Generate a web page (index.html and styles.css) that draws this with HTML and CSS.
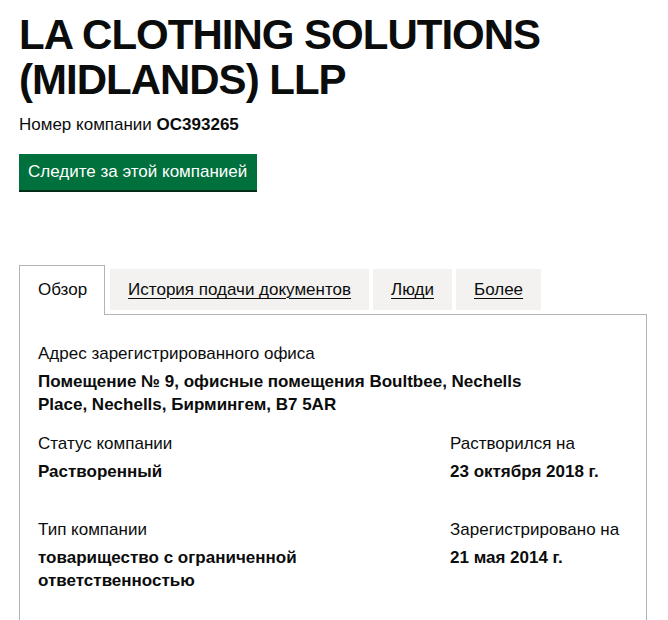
FILE: index.html
```html
<!DOCTYPE html>
<html lang="ru">
<head>
<meta charset="utf-8">
<title>LA CLOTHING SOLUTIONS (MIDLANDS) LLP</title>
<link rel="stylesheet" href="styles.css">
</head>
<body>
<main class="page">
  <h1 class="title">LA CLOTHING SOLUTIONS (MIDLANDS) LLP</h1>
  <p class="company-number">Номер компании <strong>OC393265</strong></p>
  <a class="button" href="#">Следите за этой компанией</a>

  <div class="tabs">
    <ul class="tab-list">
      <li class="tab tab-selected"><a href="#">Обзор</a></li>
      <li class="tab"><a href="#">История подачи документов</a></li>
      <li class="tab"><a href="#">Люди</a></li>
      <li class="tab"><a href="#">Более</a></li>
    </ul>
    <section class="panel">
      <dl class="item item-address">
        <dt>Адрес зарегистрированного офиса</dt>
        <dd>Помещение № 9, офисные помещения Boultbee, Nechells Place, Nechells, Бирмингем, B7 5AR</dd>
      </dl>
      <div class="row row-first">
        <dl class="item">
          <dt>Статус компании</dt>
          <dd>Растворенный</dd>
        </dl>
        <dl class="item">
          <dt>Растворился на</dt>
          <dd>23 октября 2018 г.</dd>
        </dl>
      </div>
      <div class="row">
        <dl class="item">
          <dt>Тип компании</dt>
          <dd>товарищество с ограниченной ответственностью</dd>
        </dl>
        <dl class="item">
          <dt>Зарегистрировано на</dt>
          <dd>21 мая 2014 г.</dd>
        </dl>
      </div>
    </section>
  </div>
</main>
</body>
</html>
```

FILE: styles.css
```css
* { box-sizing: border-box; }
html, body { margin: 0; padding: 0; background: #fff; }
body {
  font-family: "Liberation Sans", Arial, sans-serif;
  color: #0b0c0c;
  font-size: 17px;
}
.page {
  padding: 12px 21px 0 19px;
}
.title {
  margin: 0;
  font-size: 42px;
  line-height: 45px;
  font-weight: 700;
  letter-spacing: -1px;
  width: 560px;
}
.company-number {
  margin: 13px 0 0;
  line-height: 20px;
}
.company-number strong { font-weight: 700; }
.button {
  display: inline-block;
  margin-top: 19px;
  background: #00703c;
  color: #fff;
  text-decoration: none;
  line-height: 20px;
  padding: 8px 10px 8px 9px;
  box-shadow: 0 2px 0 #002d18;
}
.tabs { margin-top: 79px; }
.tab-list {
  list-style: none;
  margin: 0;
  padding: 0;
  display: flex;
  align-items: flex-start;
  gap: 4px;
}
.tab {
  background: #f3f2f1;
  padding: 10px 18px;
  line-height: 21px;
}
.tab a {
  color: #0b0c0c;
  text-decoration: underline;
  text-underline-offset: 3px;
  text-decoration-thickness: 1px;
}
.tab-selected {
  background: #fff;
  border: 1px solid #b1b4b6;
  border-bottom: 0;
  margin-top: -4px;
  margin-right: 1px;
  padding: 13px 17px 15px 18px;
  position: relative;
  z-index: 1;
}
.tab-selected a { text-decoration: none; }
.panel {
  margin-top: -1px;
  border: 1px solid #b1b4b6;
  padding: 29px 18px 40px;
  height: 330px;
}
.item { margin: 0; }
.item dt {
  line-height: 20px;
}
.item dd {
  margin: 6px 0 0;
  font-weight: 700;
  line-height: 23px;
}
.item-address dd { width: 500px; }
.row {
  display: grid;
  grid-template-columns: 392px 1fr;
  column-gap: 20px;
}
.row-first { margin-top: 18px; }
.row + .row { margin-top: 37px; }
```
